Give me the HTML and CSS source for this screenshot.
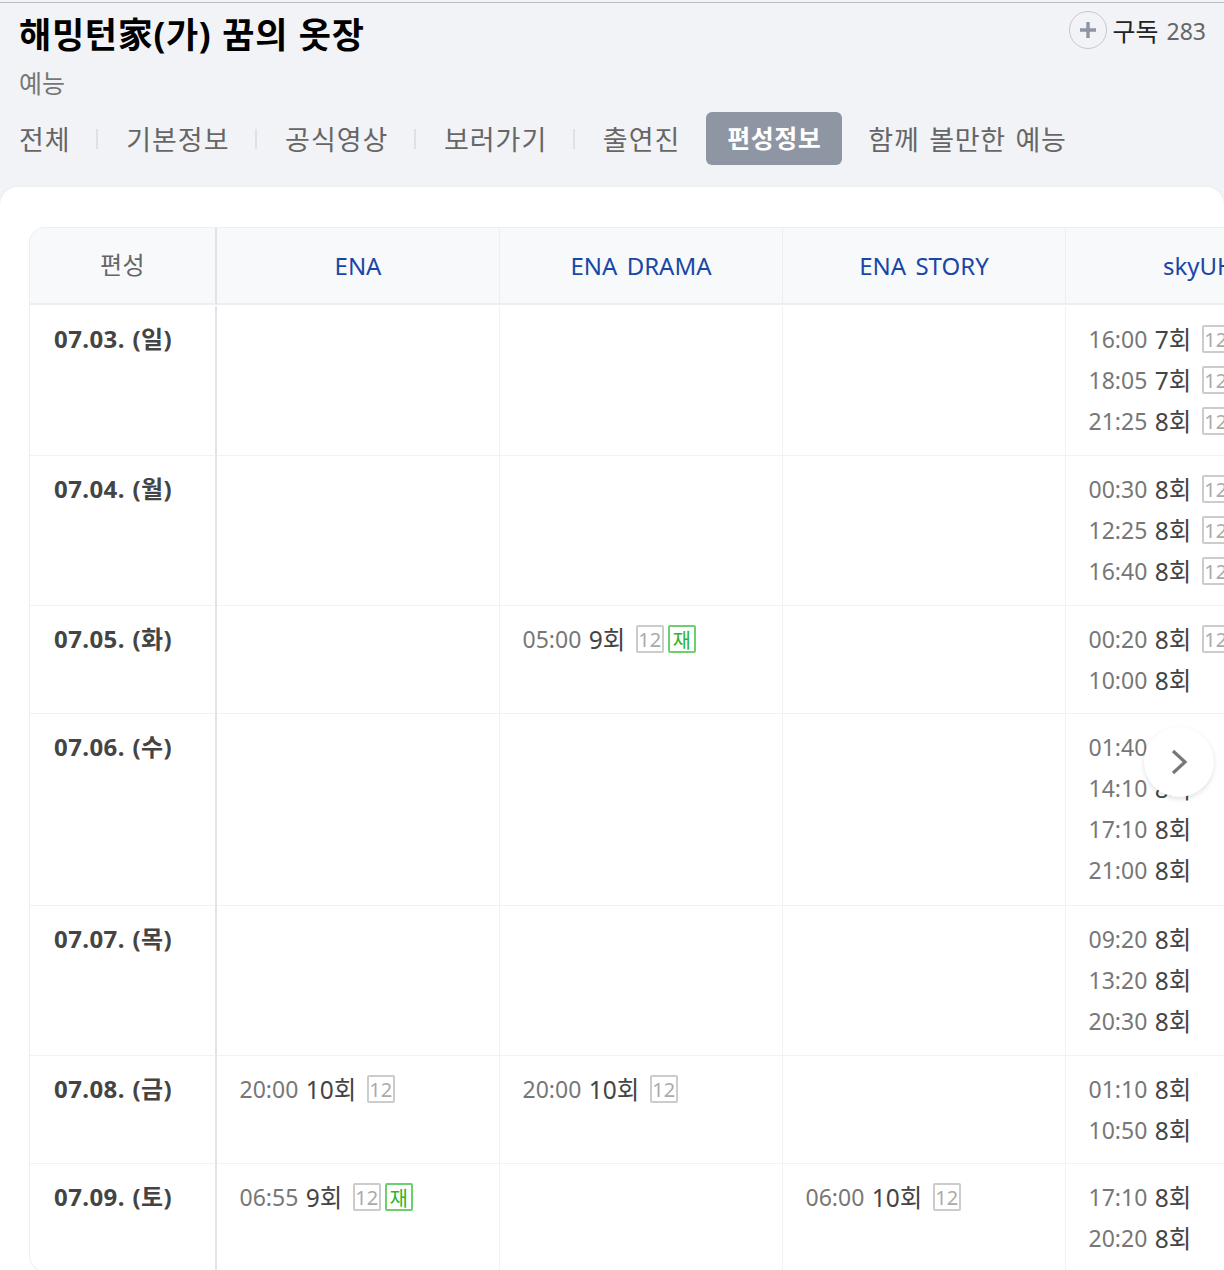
FILE: index.html
```html
<!DOCTYPE html>
<html lang="ko">
<head>
<meta charset="utf-8">
<title>해밍턴家(가) 꿈의 옷장</title>
<link rel="stylesheet" href="styles.css">
</head>
<body>
<header class="head">
  <div class="title-row">
    <h1 class="title">해밍턴家(가) 꿈의 옷장</h1>
    <div class="sub">
      <span class="plus"><svg width="20" height="20" viewBox="0 0 20 20"><path d="M10 2v16M2 10h16" stroke="#8e95a3" stroke-width="3.4" fill="none"/></svg></span>
      <span class="sub-label">구독</span>
      <span class="sub-count">283</span>
    </div>
  </div>
  <div class="genre">예능</div>
  <nav class="tabs">
    <a class="tab">전체</a><i class="sep"></i>
    <a class="tab">기본정보</a><i class="sep"></i>
    <a class="tab">공식영상</a><i class="sep"></i>
    <a class="tab">보러가기</a><i class="sep"></i>
    <a class="tab">출연진</a>
    <a class="tab active">편성정보</a>
    <a class="tab last">함께 볼만한 예능</a>
  </nav>
</header>
<main class="card">
  <div class="grid">
    <div class="hc first">편성</div>
    <div class="hc">ENA</div>
    <div class="hc">ENA DRAMA</div>
    <div class="hc">ENA STORY</div>
    <div class="hc clip">skyUHD</div>

    <div class="date">07.03. (일)</div><div class="c"></div><div class="c"></div><div class="c"></div>
    <div class="c">
      <div class="item"><span class="t">16:00</span> 7회<b class="age">12</b></div>
      <div class="item"><span class="t">18:05</span> 7회<b class="age">12</b></div>
      <div class="item"><span class="t">21:25</span> 8회<b class="age">12</b></div>
    </div>

    <div class="date">07.04. (월)</div><div class="c"></div><div class="c"></div><div class="c"></div>
    <div class="c">
      <div class="item"><span class="t">00:30</span> 8회<b class="age">12</b></div>
      <div class="item"><span class="t">12:25</span> 8회<b class="age">12</b></div>
      <div class="item"><span class="t">16:40</span> 8회<b class="age">12</b></div>
    </div>

    <div class="date">07.05. (화)</div><div class="c"></div>
    <div class="c"><div class="item"><span class="t">05:00</span> 9회<b class="age">12</b><b class="re">재</b></div></div>
    <div class="c"></div>
    <div class="c">
      <div class="item"><span class="t">00:20</span> 8회<b class="age">12</b></div>
      <div class="item"><span class="t">10:00</span> 8회</div>
    </div>

    <div class="date">07.06. (수)</div><div class="c"></div><div class="c"></div><div class="c"></div>
    <div class="c">
      <div class="item"><span class="t">01:40</span> 8회</div>
      <div class="item"><span class="t">14:10</span> 8회</div>
      <div class="item"><span class="t">17:10</span> 8회</div>
      <div class="item"><span class="t">21:00</span> 8회</div>
    </div>

    <div class="date">07.07. (목)</div><div class="c"></div><div class="c"></div><div class="c"></div>
    <div class="c">
      <div class="item"><span class="t">09:20</span> 8회</div>
      <div class="item"><span class="t">13:20</span> 8회</div>
      <div class="item"><span class="t">20:30</span> 8회</div>
    </div>

    <div class="date">07.08. (금)</div>
    <div class="c"><div class="item"><span class="t">20:00</span> 10회<b class="age">12</b></div></div>
    <div class="c"><div class="item"><span class="t">20:00</span> 10회<b class="age">12</b></div></div>
    <div class="c"></div>
    <div class="c">
      <div class="item"><span class="t">01:10</span> 8회</div>
      <div class="item"><span class="t">10:50</span> 8회</div>
    </div>

    <div class="date">07.09. (토)</div>
    <div class="c"><div class="item"><span class="t">06:55</span> 9회<b class="age">12</b><b class="re">재</b></div></div>
    <div class="c"></div>
    <div class="c"><div class="item"><span class="t">06:00</span> 10회<b class="age">12</b></div></div>
    <div class="c">
      <div class="item"><span class="t">17:10</span> 8회</div>
      <div class="item"><span class="t">20:20</span> 8회</div>
    </div>
  </div>
  <button class="next" aria-label="다음"><svg width="18" height="26" viewBox="0 0 18 26"><path d="M3 2l12 11L3 24" stroke="#777" stroke-width="3.2" fill="none"/></svg></button>
</main>
</body>
</html>
```
FILE: styles.css
```css
html, body { margin: 0; padding: 0; }
body {
  width: 1224px; height: 1270px; overflow: hidden;
  background: #f2f3f6;
  font-family: "Noto Sans", "Noto Sans CJK KR", sans-serif;
  color: #333;
  position: relative;
}
.head { border-top: 1px solid #bbb; margin-top: 2px; height: 185px; padding: 0 18px 0 19px; box-sizing: border-box; }
.title-row { display: flex; justify-content: space-between; height: 62px; }
.title { margin: 0; font-size: 35px; letter-spacing: .7px; word-spacing: 1px; line-height: 63px; font-weight: 700; color: #000; height: 62px; }
.sub { display: flex; align-items: center; height: 54px; }
.plus { width: 38px; height: 38px; border: 1px solid #c5c8d0; border-radius: 50%; box-sizing: border-box; display: flex; align-items: center; justify-content: center; margin-right: 6px; }
.sub-label { font-size: 25px; color: #222; margin-right: 8px; }
.sub-count { font-size: 23px; color: #666; padding-top: 2px; }
.genre { font-size: 25px; line-height: 36px; color: #777; }
.tabs { display: flex; align-items: center; height: 53px; margin-top: 11px; }
.tab { font-size: 27px; letter-spacing: 1px; color: #666; line-height: 51px; padding-top: 2px; }
.sep { width: 2px; height: 20px; background: #dfe1e5; margin: 0 28px 0 25.5px; }
.active { background: #8e95a3; color: #fff; font-weight: 700; font-size: 25px; letter-spacing: .5px; border-radius: 6px; padding: 0 21px; margin-left: 26px; line-height: 53px; }
.last { margin-left: 26px; letter-spacing: .7px; word-spacing: 2px; }
.card {
  position: relative; height: 1083px; background: #fff;
  border-radius: 18px 18px 0 0; overflow: hidden;
  box-shadow: 0 0 3px rgba(0,0,0,.06);
  padding: 40px 0 0 29px; box-sizing: border-box;
}
.grid {
  display: grid; width: 1320px;
  grid-template-columns: 187px 282px 283px 283px 284px;
  grid-template-rows: 78px 150px 150px 108px 192px 150px 108px 107px;
  border: 1px solid #eceef1; border-radius: 16px 0 0 16px;
  border-right: 0;
}
.hc {
  background: #f8f9fb; border-bottom: 2px solid #eceef1; border-left: 1px solid #eceef1;
  display: flex; align-items: center; justify-content: center;
  font-size: 24px; word-spacing: 3px; color: #1a47a5; box-sizing: border-box; padding-bottom: 1px; margin-bottom: 1px;
}
.hc.first { color: #666; border-left: 0; border-right: 2px solid #e1e3e8; border-top-left-radius: 16px; padding-bottom: 5px; letter-spacing: .5px; }
.hc:nth-child(2) { border-left: 0; }
.hc.clip { justify-content: flex-start; padding-left: 97px; }
.date {
  font-size: 24px; letter-spacing: .4px; word-spacing: 1px; font-weight: 700; color: #444; padding: 11px 0 0 24px;
  line-height: 44px; border-right: 2px solid #e1e3e8; border-bottom: 1px solid #f1f2f4; box-sizing: border-box;
}
.c { border-left: 1px solid #f1f2f4; border-bottom: 1px solid #f1f2f4; padding: 11.5px 0 0 22.5px; box-sizing: border-box; }
.date + .c { border-left: 0; padding-left: 22.5px; }
.item { display: flex; align-items: center; height: 41px; font-size: 24.5px; color: #444; white-space: pre; }
.t { color: #777; font-size: 23px; margin-right: 1px; padding-top: 2px; }
.age, .re {
  font-weight: 400; font-size: 20px; width: 28px; height: 28px; box-sizing: border-box;
  border: 2px solid #ccc; border-radius: 2px; color: #aaa; margin-top: 2px;
  display: flex; align-items: center; justify-content: center; flex: none; margin-left: 10.5px;
}
.re { border-color: #6cd06c; color: #2db52d; margin-left: 4px; }
.next {
  position: absolute; left: 1144px; top: 540px; width: 70px; height: 70px;
  border: 0; border-radius: 50%; background: #fff; box-shadow: 0 2px 5px rgba(0,0,0,.12);
  display: flex; align-items: center; justify-content: center; padding: 0;
}
```
